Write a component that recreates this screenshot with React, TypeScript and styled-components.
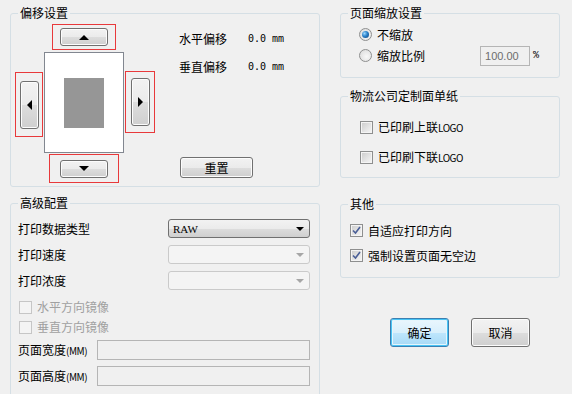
import React from 'react';
import styled, { createGlobalStyle, css } from 'styled-components';

const GlobalStyle = createGlobalStyle`
  html, body {
    margin: 0;
    padding: 0;
    background: #f0f0f0;
  }
  body {
    font-family: "Noto Sans CJK SC", "Liberation Sans", sans-serif;
    font-size: 12px;
    color: #000;
  }
`;

const Window = styled.div`
  width: 572px;
  height: 394px;
  overflow: hidden;
  box-sizing: border-box;
  padding: 6px 0 0 10px;
  display: flex;
  gap: 20px;
`;

const Column = styled.div<{ $w: number }>`
  width: ${p => p.$w}px;
  display: flex;
  flex-direction: column;
`;

const Group = styled.fieldset<{ $h: number; $mt?: number }>`
  margin: ${p => p.$mt || 0}px 0 0 0;
  padding: 0;
  min-width: 0;
  box-sizing: border-box;
  height: ${p => p.$h}px;
  flex: none;
  border: 1px solid #d5dfe5;
  border-radius: 3px;
`;

const Legend = styled.legend`
  margin-left: 7px;
  padding: 0 2px;
  line-height: 14px;
  font-size: 12px;
`;

const GroupBody = styled.div<{ $pt: number; $pl: number }>`
  padding: ${p => p.$pt}px 0 0 ${p => p.$pl}px;
  display: flex;
  flex-direction: column;
`;

/* ---- offset pad ---- */

const OffsetBody = styled.div`
  display: flex;
  padding: 4px 0 0 4px;
`;

const Pad = styled.div`
  display: grid;
  grid-template-columns: 29px 81px 30px;
  grid-template-rows: 28px 102px 29px;
`;

const RedBox = styled.div<{ $w: number; $h: number; $mt?: number; $ml?: number; $col: number; $row: number }>`
  grid-column: ${p => p.$col};
  grid-row: ${p => p.$row};
  box-sizing: border-box;
  width: ${p => p.$w}px;
  height: ${p => p.$h}px;
  margin: ${p => p.$mt || 0}px 0 0 ${p => p.$ml || 0}px;
  border: 1px solid #e8393b;
  display: flex;
  align-items: center;
  justify-content: center;
`;

const buttonFace = css`
  border: 1px solid #707070;
  border-radius: 3px;
  background: linear-gradient(#f2f2f2 0%, #ebebeb 50%, #dddddd 51%, #cfcfcf 100%);
  box-shadow: inset 0 0 0 1px #fcfcfc;
`;

const ArrowButton = styled.div<{ $w: number; $h: number }>`
  ${buttonFace};
  box-sizing: border-box;
  width: ${p => p.$w}px;
  height: ${p => p.$h}px;
  display: flex;
  align-items: center;
  justify-content: center;
`;

const Paper = styled.div`
  grid-column: 2;
  grid-row: 2;
  box-sizing: border-box;
  width: 80px;
  height: 101px;
  background: #fff;
  border: 1px solid #828790;
  display: flex;
  align-items: center;
  justify-content: center;
`;

const PrintArea = styled.div`
  width: 40px;
  height: 50px;
  background: #969696;
`;

const Info = styled.div`
  margin-left: 24px;
  display: flex;
  flex-direction: column;
  flex: 1;
`;

const InfoRow = styled.div<{ $mt: number }>`
  display: flex;
  margin-top: ${p => p.$mt}px;
  line-height: 14px;
`;

const InfoLabel = styled.span`
  width: 69px;
`;

const InfoValue = styled.span`
  font-family: "DejaVu Sans Mono", monospace;
  font-size: 10px;
  color: #000;
`;

const PushButton = styled.div<{ $w: number; $h: number; $default?: boolean }>`
  ${buttonFace};
  box-sizing: border-box;
  width: ${p => p.$w}px;
  height: ${p => p.$h}px;
  display: flex;
  align-items: center;
  justify-content: center;
  font-size: 12px;
  ${p =>
    p.$default &&
    css`
      border-color: #3c7fb1;
      background: linear-gradient(#eaf6fd 0%, #d9f0fc 50%, #bee6fd 51%, #a7d9f5 100%);
      box-shadow: inset 0 0 0 1px #48c4f5, inset 0 0 0 2px #e5f5fc;
    `}
`;

const ResetButton = styled(PushButton)`
  margin: auto 0 5px 1px;
`;

/* ---- form rows ---- */

const FieldRow = styled.div<{ $h: number; $top?: boolean }>`
  display: flex;
  height: ${p => p.$h}px;
  align-items: ${p => (p.$top ? 'flex-start' : 'center')};
`;

const FieldLabel = styled.span<{ $w: number }>`
  width: ${p => p.$w}px;
  line-height: 19px;
  flex: none;
`;

const Narrow = styled.span`
  font-size: 10px;
  letter-spacing: -0.5px;
`;

const Select = styled.div<{ $disabled?: boolean }>`
  box-sizing: border-box;
  width: 142px;
  height: 19px;
  border-radius: 3px;
  display: flex;
  align-items: center;
  justify-content: space-between;
  padding: 0 5px 0 4px;
  font-family: "Liberation Serif", serif;
  font-size: 11px;
  border: 1px solid ${p => (p.$disabled ? '#cacaca' : '#707070')};
  background: ${p =>
    p.$disabled ? '#f4f4f4' : 'linear-gradient(#f2f2f2 0%, #ebebeb 50%, #dddddd 51%, #cfcfcf 100%)'};
`;

const Caret = styled.span<{ $disabled?: boolean }>`
  width: 0;
  height: 0;
  border-left: 4px solid transparent;
  border-right: 4px solid transparent;
  border-top: 4px solid ${p => (p.$disabled ? '#a6a6a6' : '#000')};
`;

const TextBox = styled.div<{ $w: number; $h: number; $ml?: number }>`
  box-sizing: border-box;
  width: ${p => p.$w}px;
  height: ${p => p.$h}px;
  margin-left: ${p => p.$ml || 0}px;
  border: 1px solid #b5b5b5;
  background: #f0f0f0;
  color: #6d6d6d;
  font-family: "Liberation Sans", sans-serif;
  font-size: 11px;
  line-height: 18px;
  padding-left: 4px;
`;

const CheckLabel = styled.span<{ $disabled?: boolean }>`
  margin-left: 5px;
  color: ${p => (p.$disabled ? '#a0a0a0' : '#000')};
  line-height: 14px;
`;

const Box = styled.span<{ $disabled?: boolean; $ml?: number }>`
  box-sizing: border-box;
  width: 13px;
  height: 13px;
  margin-left: ${p => p.$ml || 0}px;
  flex: none;
  display: flex;
  align-items: center;
  justify-content: center;
  border: 1px solid ${p => (p.$disabled ? '#c6c6c6' : '#8e8f8f')};
  background: ${p =>
    p.$disabled ? '#f4f4f4' : 'linear-gradient(135deg, #cbcbcb 0%, #e6e6e6 60%, #f6f6f6 100%)'};
  box-shadow: inset 0 0 0 1px #f4f4f4;
`;

const Round = styled.span<{ $on?: boolean }>`
  box-sizing: border-box;
  width: 13px;
  height: 13px;
  border-radius: 50%;
  flex: none;
  display: flex;
  align-items: center;
  justify-content: center;
  border: 1px solid #8e8f8f;
  background: radial-gradient(circle at 60% 60%, #f8f8f8 0%, #d8d8d8 100%);
  &::after {
    content: '';
    display: ${p => (p.$on ? 'block' : 'none')};
    width: 7px;
    height: 7px;
    border-radius: 50%;
    background: radial-gradient(circle at 35% 35%, #9ad8ff 0%, #2a80c8 45%, #0d3f78 100%);
  }
`;

const Percent = styled.span`
  margin-left: 3px;
  font-family: "Liberation Mono", monospace;
  font-size: 10px;
`;

const ButtonRow = styled.div`
  display: flex;
  gap: 22px;
  margin-top: 40px;
  padding-left: 50px;
`;

/* ---- small parts ---- */

const Tri: React.FC<{ dir: 'up' | 'down' | 'left' | 'right' }> = ({ dir }) => {
  const pts = {
    up: '0,5 10,5 5,0',
    down: '0,0 10,0 5,5',
    left: '5,0 5,10 0,5',
    right: '0,0 0,10 5,5',
  }[dir];
  const vertical = dir === 'up' || dir === 'down';
  return (
    <svg width={vertical ? 10 : 5} height={vertical ? 5 : 10}>
      <polygon points={pts} fill="#000" />
    </svg>
  );
};

const CheckBox: React.FC<{ checked?: boolean; disabled?: boolean; ml?: number }> = ({ checked, disabled, ml }) => (
  <Box $disabled={disabled} $ml={ml}>
    {checked && (
      <svg width="9" height="9" viewBox="0 0 9 9">
        <path d="M1 4.5 L3.5 7 L8 1" stroke="#4a5f97" strokeWidth="1.6" fill="none" />
      </svg>
    )}
  </Box>
);

const App: React.FC = () => (
  <>
    <GlobalStyle />
    <Window>
      <Column $w={310}>
        <Group $h={181}>
          <Legend>偏移设置</Legend>
          <OffsetBody>
            <Pad>
              <RedBox $col={2} $row={1} $w={64} $h={26} $ml={8}>
                <ArrowButton $w={48} $h={18}><Tri dir="up" /></ArrowButton>
              </RedBox>
              <RedBox $col={1} $row={2} $w={28} $h={65} $mt={20}>
                <ArrowButton $w={19} $h={48}><Tri dir="left" /></ArrowButton>
              </RedBox>
              <Paper><PrintArea /></Paper>
              <RedBox $col={3} $row={2} $w={30} $h={62} $mt={19}>
                <ArrowButton $w={19} $h={48}><Tri dir="right" /></ArrowButton>
              </RedBox>
              <RedBox $col={2} $row={3} $w={70} $h={29} $ml={5}>
                <ArrowButton $w={48} $h={18}><Tri dir="down" /></ArrowButton>
              </RedBox>
            </Pad>
            <Info>
              <InfoRow $mt={8}>
                <InfoLabel>水平偏移</InfoLabel>
                <InfoValue>0.0 mm</InfoValue>
              </InfoRow>
              <InfoRow $mt={14}>
                <InfoLabel>垂直偏移</InfoLabel>
                <InfoValue>0.0 mm</InfoValue>
              </InfoRow>
              <ResetButton $w={73} $h={21}>重置</ResetButton>
            </Info>
          </OffsetBody>
        </Group>

        <Group $h={220} $mt={9}>
          <Legend>高级配置</Legend>
          <GroupBody $pt={9} $pl={7}>
            <FieldRow $h={26} $top>
              <FieldLabel $w={150}>打印数据类型</FieldLabel>
              <Select>RAW<Caret /></Select>
            </FieldRow>
            <FieldRow $h={26} $top>
              <FieldLabel $w={150}>打印速度</FieldLabel>
              <Select $disabled><span /><Caret $disabled /></Select>
            </FieldRow>
            <FieldRow $h={26} $top>
              <FieldLabel $w={150}>打印浓度</FieldLabel>
              <Select $disabled><span /><Caret $disabled /></Select>
            </FieldRow>
            <FieldRow $h={20}>
              <CheckBox disabled ml={1} />
              <CheckLabel $disabled>水平方向镜像</CheckLabel>
            </FieldRow>
            <FieldRow $h={20}>
              <CheckBox disabled ml={1} />
              <CheckLabel $disabled>垂直方向镜像</CheckLabel>
            </FieldRow>
            <FieldRow $h={26}>
              <FieldLabel $w={79}>页面宽度<Narrow>(MM)</Narrow></FieldLabel>
              <TextBox $w={213} $h={20} />
            </FieldRow>
            <FieldRow $h={26}>
              <FieldLabel $w={79}>页面高度<Narrow>(MM)</Narrow></FieldLabel>
              <TextBox $w={213} $h={20} />
            </FieldRow>
          </GroupBody>
        </Group>
      </Column>

      <Column $w={220}>
        <Group $h={72}>
          <Legend>页面缩放设置</Legend>
          <GroupBody $pt={4} $pl={18}>
            <FieldRow $h={21}>
              <Round $on />
              <CheckLabel>不缩放</CheckLabel>
            </FieldRow>
            <FieldRow $h={21}>
              <Round />
              <CheckLabel>缩放比例</CheckLabel>
              <TextBox $w={50} $h={20} $ml={55}>100.00</TextBox>
              <Percent>%</Percent>
            </FieldRow>
          </GroupBody>
        </Group>

        <Group $h={89} $mt={11}>
          <Legend>物流公司定制面单纸</Legend>
          <GroupBody $pt={9} $pl={19}>
            <FieldRow $h={30}>
              <CheckBox />
              <CheckLabel>已印刷上联<Narrow>LOGO</Narrow></CheckLabel>
            </FieldRow>
            <FieldRow $h={30}>
              <CheckBox />
              <CheckLabel>已印刷下联<Narrow>LOGO</Narrow></CheckLabel>
            </FieldRow>
          </GroupBody>
        </Group>

        <Group $h={81} $mt={19}>
          <Legend>其他</Legend>
          <GroupBody $pt={7} $pl={9}>
            <FieldRow $h={25}>
              <CheckBox checked />
              <CheckLabel>自适应打印方向</CheckLabel>
            </FieldRow>
            <FieldRow $h={25}>
              <CheckBox checked />
              <CheckLabel>强制设置页面无空边</CheckLabel>
            </FieldRow>
          </GroupBody>
        </Group>

        <ButtonRow>
          <PushButton $w={59} $h={29} $default>确定</PushButton>
          <PushButton $w={59} $h={29}>取消</PushButton>
        </ButtonRow>
      </Column>
    </Window>
  </>
);

export default App;
